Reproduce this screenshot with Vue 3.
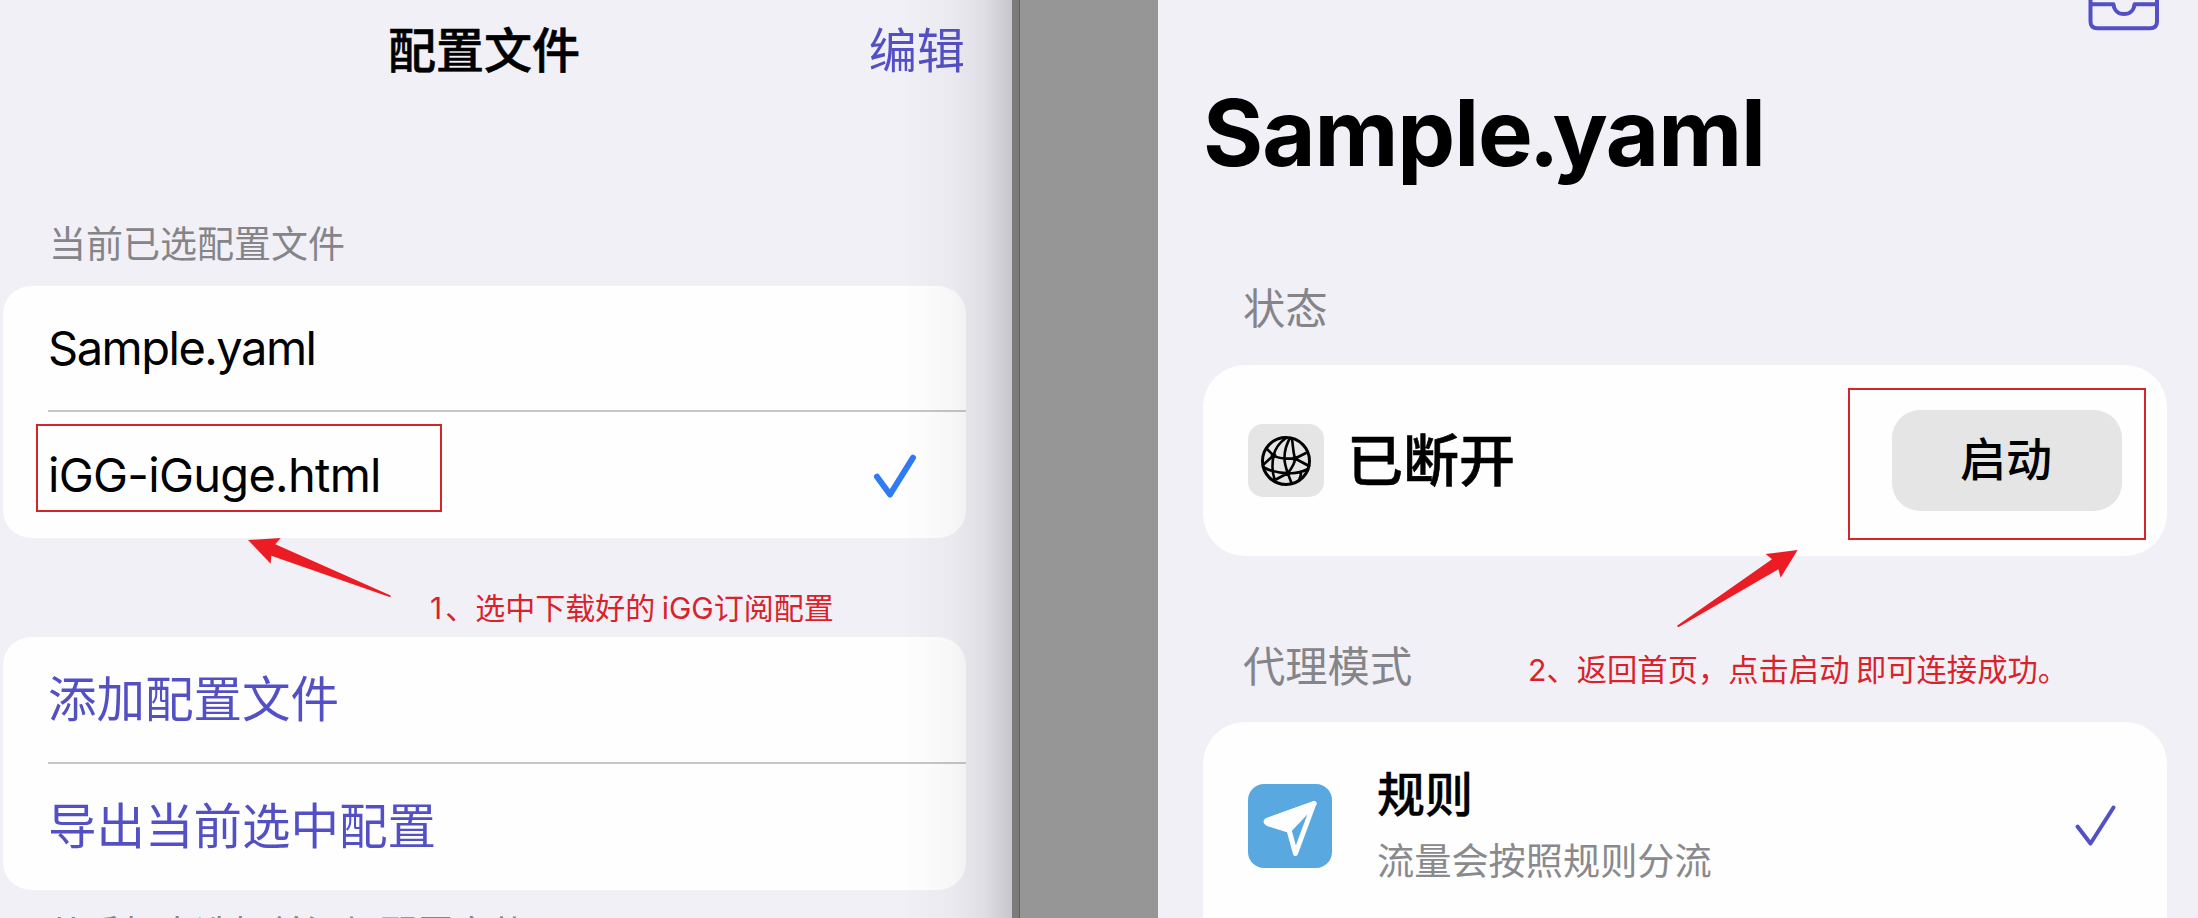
<script setup>
const files = [
  { name: 'Sample.yaml', spacing: 'sample', selected: false },
  { name: 'iGG-iGuge.html', spacing: 'igg', selected: true },
]
const actions = ['添加配置文件', '导出当前选中配置']
</script>

<template>
  <div class="stage">
    <section class="panel files">
      <header class="nav">
        <h1>配置文件</h1>
        <a class="edit">编辑</a>
      </header>
      <p class="label">当前已选配置文件</p>
      <ul class="card">
        <li v-for="f in files" :key="f.name" class="row">
          <span :class="f.spacing">{{ f.name }}</span>
          <svg v-if="f.selected" class="tick" width="44" height="46" viewBox="0 0 44 46">
            <path d="M5 24.7 18 42.5 41 5.7" />
          </svg>
        </li>
      </ul>
      <ul class="card second">
        <li v-for="a in actions" :key="a" class="row action"><span>{{ a }}</span></li>
      </ul>
      <p class="hint">从手机中选择并添加配置文件</p>
      <div class="shade"></div>
    </section>

    <div class="edge"></div>
    <div class="gutter"></div>

    <section class="panel home">
      <div class="toolbar">
        <svg width="72" height="32" viewBox="0 0 72 32">
          <path d="M2.500 -6V21.500Q2.500 28.300 9.500 28.300H62Q69 28.300 69 21.500V-6M2.500 4.300H25.500C26 10 30 14 36 14S46 10 46.500 4.300H69" />
        </svg>
      </div>
      <h2>Sample<span class="dot-tight">.</span>yaml</h2>
      <p class="section">状态</p>
      <div class="box status">
        <div class="globe">
          <svg width="52" height="52" viewBox="0 0 52 52">
            <circle cx="26" cy="26" r="23.500" stroke-width="3" />
            <path d="M26 3C19 8 15 14 13.500 20.500C12 29 11.500 36 14.500 44M30 3C26 10 24 17 24.500 25C25 32 27 37 31.500 48M32 4C33 10 33 17 35 23.500M7 14L13.500 20.500C18 23.500 25 24 35 23.500L46 18M3 30L13.500 20.500M35 23.500L49 31M35 23.500C35 29 31 34 28 38M3 32C10 36 18 38 28 38C36 39 42 37 48 34M28 38L15 45M41 38C41 41 40 43 39 45" />
            <circle class="dot" cx="13.500" cy="20.500" r="2.800" />
            <circle class="dot" cx="35" cy="23.500" r="2.800" />
            <circle class="dot" cx="28" cy="38" r="2.600" />
          </svg>
        </div>
        <strong>已断开</strong>
        <button>启动</button>
      </div>
      <p class="section mode">代理模式</p>
      <div class="box rule">
        <div class="plane">
          <svg width="84" height="84" viewBox="0 0 84 84">
            <path class="solid" d="M66 19.500 19 36.500Q17 38 20 39.500L41 46Z" />
            <path d="M66 19.500 19 36.500Q17 38 20 39.500L41 46 47.500 69.500 66 19.500 41 46" />
          </svg>
        </div>
        <div class="texts">
          <b>规则</b>
          <span>流量会按照规则分流</span>
        </div>
        <svg class="check" width="44" height="44" viewBox="0 0 44 44">
          <path d="M3.500 22.500 16.500 39.500 39.500 3.500" />
        </svg>
      </div>
    </section>

    <!-- annotations laid over both panels -->
    <div class="frame frame-file"></div>
    <div class="frame frame-start"></div>
    <svg class="arrows" width="2198" height="918" viewBox="0 0 2198 918">
      <path d="M248 540 280.700 538 275.300 544.300 390.700 595.500 390.300 597.300 271.300 555.700 270.700 563.700Z" />
      <path d="M1797.600 550 1765.600 554 1772 559.300 1677 625.700 1678.300 627.200 1778.400 569.300 1780.600 577.700Z" />
    </svg>
    <p class="note note-one"><span class="ordinal">1</span>、选中下载好的 iGG订阅配置</p>
    <p class="note note-two">2、返回首页，点击启动 即可连接成功。</p>
  </div>
</template>

<style>
body {
  margin: 0;
  overflow: hidden;
}
</style>

<style scoped>
.stage {
  position: relative;
  display: flex;
  width: 2198px;
  height: 918px;
  overflow: hidden;
  background: #969696;
  color: #000;
  font-family: Inter, "Noto Sans CJK SC", sans-serif;
}
h1, h2, p, ul {
  margin: 0;
  padding: 0;
}
svg {
  display: block;
  fill: none;
  stroke-linecap: round;
  stroke-linejoin: round;
}
.panel {
  box-sizing: border-box;
  height: 918px;
  overflow: hidden;
  background: #f1f0f6;
}
.files {
  position: relative;
  width: 1012px;
}
.nav {
  display: grid;
  grid-template-columns: 1fr auto 1fr;
  align-items: center;
  width: 966px;
  height: 102px;
}
.nav h1 {
  grid-column: 2;
  padding-left: 2px;
  font-size: 48px;
  font-weight: 500;
  line-height: 60px;
  -webkit-text-stroke: 0.600px #000;
}
.edit {
  justify-self: end;
  padding-right: 1px;
  color: #5350c6;
  font-size: 48.200px;
  line-height: 60px;
}
.label {
  margin: 123px 0 21px 49px;
  color: #858589;
  font-size: 37px;
  line-height: 40px;
}
.card {
  width: 963px;
  height: 252px;
  margin-left: 3px;
  border-radius: 28px;
  overflow: hidden;
  background: #fefefe;
  list-style: none;
}
.card.second {
  height: 253px;
  margin-top: 99px;
}
.row {
  display: flex;
  align-items: center;
  justify-content: space-between;
  height: 124px;
  margin-left: 45px;
  padding-right: 50px;
  font-size: 47px;
  line-height: 60px;
}
.row + .row {
  height: 125px;
  border-top: 2px solid #c6c6c8;
}
.second .row {
  height: 125px;
}
.action {
  color: #5350c6;
  font-size: 48.500px;
}
.sample {
  letter-spacing: -1.500px;
}
.igg {
  letter-spacing: -0.720px;
}
.tick {
  stroke: #2f7af5;
  stroke-width: 6px;
}
.hint {
  margin: 23px 0 0 48px;
  color: #858589;
  font-size: 36.900px;
  line-height: 42px;
}
.shade {
  position: absolute;
  top: 0;
  right: 0;
  width: 110px;
  height: 918px;
  background: linear-gradient(to right, rgba(40, 40, 50, 0), rgba(40, 40, 50, 0.030) 45%, rgba(40, 40, 50, 0.090) 75%, rgba(40, 40, 50, 0.210));
}
.edge {
  box-sizing: border-box;
  width: 8px;
  height: 918px;
  border-right: 1px solid #636363;
  background: #7b7b7b;
}
.gutter {
  width: 138px;
  background: #969696;
}
.home {
  width: 1040px;
  padding: 0 31px 0 45px;
}
.toolbar {
  display: flex;
  justify-content: flex-end;
  height: 83px;
  margin-right: 7px;
}
.toolbar svg {
  stroke: #5350c6;
  stroke-width: 4px;
}
.home h2 {
  font-size: 92px;
  font-weight: 700;
  line-height: 100px;
  letter-spacing: -1.100px;
}
.dot-tight {
  margin-left: -3px;
  letter-spacing: -7px;
}
.section {
  margin: 101px 0 0 40px;
  color: #858589;
  font-size: 42.300px;
  line-height: 50px;
}
.section.mode {
  margin-top: 86px;
}
.box {
  display: flex;
  align-items: center;
  box-sizing: border-box;
  width: 964px;
  border-radius: 42px;
  background: #fefefe;
}
.status {
  height: 191px;
  margin-top: 31px;
  padding: 0 45px;
}
.globe {
  display: grid;
  place-items: center;
  width: 76px;
  height: 73px;
  border-radius: 15px;
  background: #e5e5e5;
}
.globe svg {
  stroke: #000;
  stroke-width: 2.600px;
}
.globe .dot {
  fill: #000;
  stroke: none;
}
.status strong {
  margin-left: 23px;
  font-size: 56px;
  font-weight: 500;
  line-height: 70px;
  -webkit-text-stroke: 0.600px #000;
}
.status button {
  width: 230px;
  height: 101px;
  margin-left: auto;
  padding: 0 2px 4px 0;
  border: 0;
  border-radius: 28px;
  background: #e5e5e5;
  color: #000;
  font: 500 46px/60px Inter, "Noto Sans CJK SC", sans-serif;
}
.rule {
  align-items: flex-start;
  height: 260px;
  margin-top: 30px;
  padding: 0 49px 0 45px;
}
.plane {
  width: 84px;
  height: 84px;
  margin-top: 62px;
  border-radius: 16px;
  background: #59a9e0;
}
.plane svg {
  stroke: #fefefe;
  stroke-width: 5px;
}
.plane .solid {
  fill: #fefefe;
}
.texts {
  display: flex;
  flex-direction: column;
  margin: 43px auto 0 45px;
}
.texts b {
  font-size: 48px;
  font-weight: 500;
  line-height: 60px;
  -webkit-text-stroke: 0.300px #000;
}
.texts span {
  margin-top: 17px;
  color: #8a8a8e;
  font-size: 37.200px;
  line-height: 40px;
}
.check {
  margin-top: 82px;
  stroke: #5350c6;
  stroke-width: 4px;
}
.frame {
  position: absolute;
  box-sizing: border-box;
  border: 2px solid #d4252d;
}
.frame-file {
  left: 36px;
  top: 424px;
  width: 406px;
  height: 88px;
}
.frame-start {
  left: 1848px;
  top: 388px;
  width: 298px;
  height: 152px;
}
.arrows {
  position: absolute;
  left: 0;
  top: 0;
}
.arrows path {
  fill: #ec1c24;
}
.note {
  position: absolute;
  color: #d9222b;
  font-size: 30.300px;
  line-height: 40px;
  white-space: nowrap;
  word-spacing: -2px;
}
.note-one {
  left: 430px;
  top: 588px;
  font-size: 30px;
}
.ordinal {
  letter-spacing: 3px;
}
.note-two {
  left: 1528px;
  top: 650px;
}
</style>
